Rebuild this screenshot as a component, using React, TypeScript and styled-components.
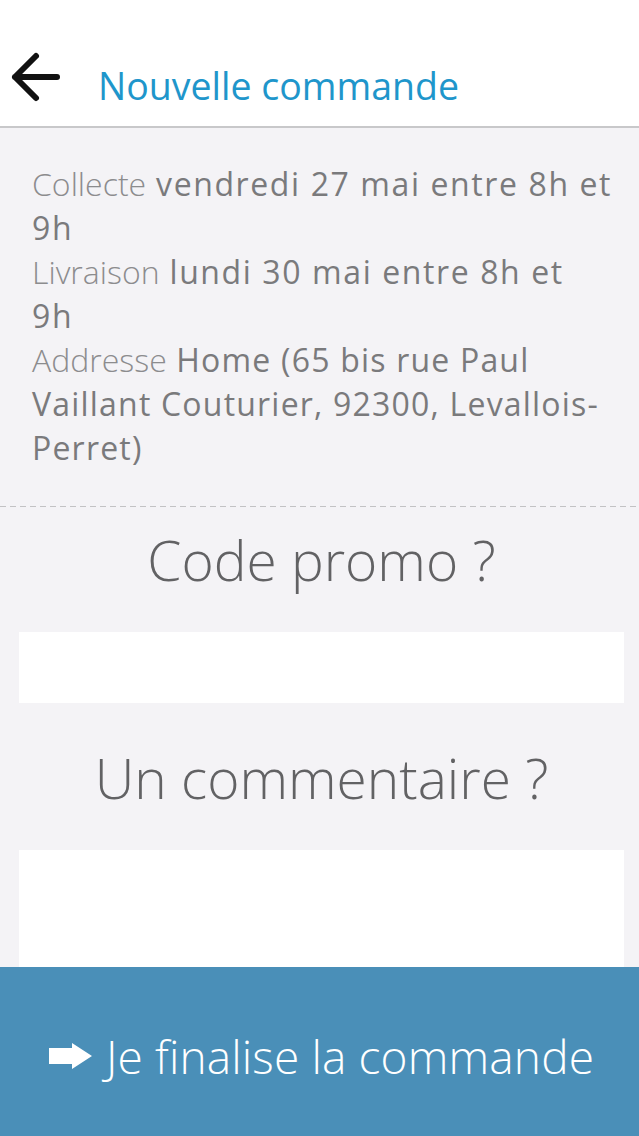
import styled, { createGlobalStyle } from 'styled-components';

const GlobalStyle = createGlobalStyle`
  html, body {
    margin: 0;
    padding: 0;
    background: #f4f3f6;
    font-family: "Open Sans", "Noto Sans", sans-serif;
  }
  * { box-sizing: border-box; }
`;

const Page = styled.div`
  min-height: 1136px;
  background: #f4f3f6;
  padding-bottom: 180px;
`;

const Header = styled.header`
  height: 128px;
  background: #ffffff;
  border-bottom: 2px solid #c8c8ca;
  display: flex;
  align-items: center;
  padding: 44px 0 0 10px;
`;

const BackButton = styled.button`
  background: none;
  border: none;
  padding: 0;
  width: 52px;
  height: 52px;
  margin-bottom: 16px;
  display: flex;
  align-items: center;
  justify-content: center;
  color: #111;
  cursor: pointer;
`;

const Title = styled.h1`
  margin: 0 0 0 36px;
  font-size: 37.5px;
  font-weight: 400;
  color: #1f96cb;
`;

const Info = styled.section`
  padding: 34px 26px 36px 32px;
`;

const InfoLine = styled.p<{ $spacing?: number }>`
  margin: 0;
  font-size: 32px;
  line-height: 44px;
  color: #7a7a7c;
  font-weight: 400;
  letter-spacing: ${({ $spacing = 1.6 }) => $spacing}px;
`;

const Label = styled.span`
  font-weight: 300;
  color: #8c8c8e;
  letter-spacing: 0;
`;

const Divider = styled.hr`
  margin: 0;
  border: none;
  height: 1px;
  background: repeating-linear-gradient(to right, #c2c2c4 0 6px, transparent 6px 10px);
`;

const Section = styled.div`
  padding: 0 15px 0 19px;
  display: flex;
  flex-direction: column;
`;

const Question = styled.h2<{ $top: number }>`
  margin: ${({ $top }) => $top}px 0 0;
  text-align: center;
  font-size: 55px;
  font-weight: 300;
  color: #626264;
  line-height: 70px;
`;

const Field = styled.div<{ $height: number; $top: number }>`
  margin-top: ${({ $top }) => $top}px;
  height: ${({ $height }) => $height}px;
  background: #ffffff;
`;

const Submit = styled.button`
  position: fixed;
  left: 0;
  right: 0;
  bottom: 0;
  height: 169px;
  border: none;
  background: #4a8fb8;
  color: #ffffff;
  font-family: "Open Sans", "Noto Sans", sans-serif;
  font-size: 46px;
  font-weight: 300;
  letter-spacing: 0.15px;
  display: flex;
  align-items: center;
  justify-content: center;
  gap: 14px;
  padding: 8px 0 0 4px;
  cursor: pointer;
`;

const ArrowIcon = () => (
  <svg width="43" height="26" viewBox="0 0 43 26">
    <path d="M0 5h23V0l20 13-20 13v-5H0z" fill="#ffffff" />
  </svg>
);

const BackIcon = () => (
  <svg width="52" height="52" viewBox="0 0 52 52" fill="none">
    <path
      d="M47 26H5M26 5L5 26l21 21"
      stroke="currentColor"
      strokeWidth="6"
      strokeLinecap="round"
      strokeLinejoin="round"
    />
  </svg>
);

export default function App() {
  return (
    <>
      <GlobalStyle />
      <Page>
        <Header>
          <BackButton aria-label="Retour">
            <BackIcon />
          </BackButton>
          <Title>Nouvelle commande</Title>
        </Header>

        <Info>
          <InfoLine>
            <Label>Collecte</Label> vendredi 27 mai entre 8h et 9h
          </InfoLine>
          <InfoLine>
            <Label>Livraison</Label> lundi 30 mai entre 8h et 9h
          </InfoLine>
          <InfoLine $spacing={1.2}>
            <Label>Addresse</Label> Home (65 bis rue Paul Vaillant Couturier, 92300, Levallois-Perret)
          </InfoLine>
        </Info>
        <Divider />

        <Section>
          <Question $top={18}>Code promo ?</Question>
          <Field $top={37} $height={71} />
          <Question $top={40}>Un commentaire ?</Question>
          <Field $top={37} $height={140} />
        </Section>
      </Page>

      <Submit>
        <ArrowIcon />
        Je finalise la commande
      </Submit>
    </>
  );
}
